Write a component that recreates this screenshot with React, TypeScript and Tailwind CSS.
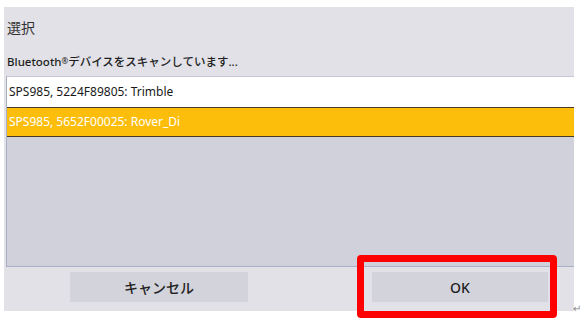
const rows = [
  { label: "SPS985, 5224F89805: Trimble", selected: false },
  { label: "SPS985, 5652F00025: Rover_Di", selected: true },
]

const App = () => {
  return (
    <div
      className="relative w-[585px] h-[329px] bg-white overflow-hidden"
      style={{ fontFamily: '"Noto Sans", "Noto Sans CJK JP", sans-serif' }}
    >
      <div className="ml-[4px] mt-[7px] w-[570px] h-[304px] bg-[#e1e1e7] flex flex-col">
        <div className="pl-[3px] pt-[12px] text-[14px] leading-[18px] text-[#333]">
          選択
        </div>
        <div className="pl-[3px] mt-[16px] text-[11.5px] leading-[16px] font-medium text-[#1e1e1e]">
          Bluetooth<span className="text-[8px] align-[2px]">®</span>デバイスをスキャンしています...
        </div>
        <div className="mt-[6px] ml-[2px] flex-1 flex flex-col bg-[#d0d1da] border-t border-t-[#c3c8d4] border-l border-l-[#a9b1c6] border-b border-b-[#a9b1c6]">
          {rows.map((row) =>
            row.selected ? (
              <div
                key={row.label}
                className="h-[30px] flex items-center pl-[2px] bg-[#fdbd0b] border-y border-[#4b3a22] text-[12px] text-white"
              >
                {row.label}
              </div>
            ) : (
              <div
                key={row.label}
                className="h-[30px] flex items-center pl-[2px] bg-white text-[12px] text-[#1a1a1a]"
              >
                {row.label}
              </div>
            )
          )}
        </div>
        <div className="h-[44px] flex items-start pt-[5px]">
          <button className="ml-[66px] w-[178px] h-[30px] bg-[#d3d3db] text-[14px] font-medium text-[#222]">
            キャンセル
          </button>
          <button className="ml-[124px] w-[176px] h-[30px] bg-[#d3d3db] text-[14px] font-medium text-[#222]">
            OK
          </button>
        </div>
      </div>
      <div className="absolute left-[357px] top-[255px] w-[200px] h-[63px] border-[7px] border-[#ff0000] rounded-[4px]" />
      <div className="absolute left-[573px] top-[302px] text-[10px] leading-[12px] text-[#888]">
        ↵
      </div>
    </div>
  )
}

export default App
